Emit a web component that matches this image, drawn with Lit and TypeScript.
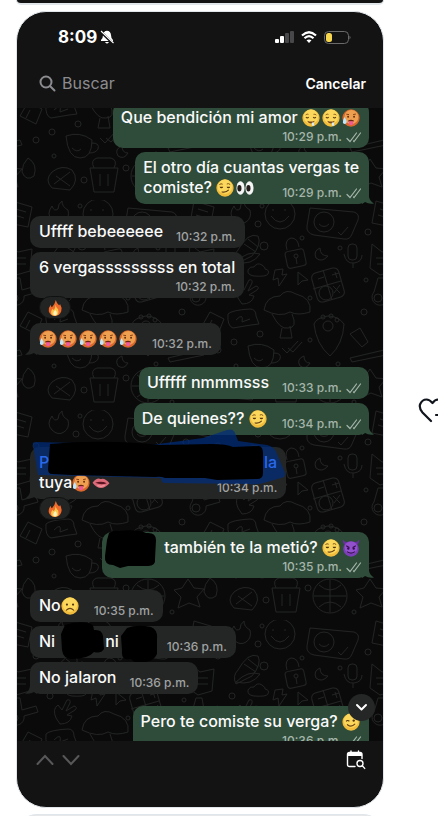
import { LitElement, html, css, svg, nothing } from "lit";
import { customElement, property } from "lit/decorators.js";

type EmojiName = "drool" | "hot" | "smirk" | "eyes" | "lips" | "devil" | "frown" | "wink" | "fire";

const face = svg`
  <circle cx="10" cy="10" r="9.6" fill="#f3bd3c"/>
  <circle cx="10" cy="8.6" r="8" fill="#fbd75c"/>`;

const art: Record<EmojiName, unknown> = {
  drool: svg`${face}
    <path d="M4 6.6q1.6-1.6 3.2-.6M12.8 6q1.8-.8 3.2.8" stroke="#8a5a18" fill="none"/>
    <path d="M4.4 9q1.4 1.6 3 0M12.4 9q1.6 1.6 3 0" stroke="#5d3a10" stroke-width="1.3" fill="none"/>
    <path d="M6 13q4 2 8 0-.8 3-4 3t-4-3z" fill="#7a4514"/>
    <path d="M11 15h2.400v3q-1.200 1.800-2.400 0z" fill="#d5ecf8"/>`,
  hot: svg`
    <circle cx="10" cy="10" r="9.600" fill="#d9672a"/>
    <circle cx="10.400" cy="8.800" r="7.800" fill="#ee9f50"/>
    <path d="M4.800 5.800l3 .4M12.400 6.200l3-.6" stroke="#7a3310" stroke-width="1"/>
    <circle cx="6.800" cy="8.600" r="1" fill="#5b260d"/><circle cx="13.400" cy="8.600" r="1" fill="#5b260d"/>
    <path d="M6.800 12.800q3.200-1.600 6.400 0l-.6 1.400H7.400z" fill="#6b2411"/>
    <path d="M7.800 13.600h4.600v3q-2.300 2.800-4.600 0z" fill="#f0599a"/>
    <path d="M2.600 9q3.200 4 2.400 6.600-2 2.400-4 0Q.6 13 2.600 9z" fill="#bfe6fb"/>`,
  smirk: svg`${face}
    <path d="M3.800 6.200q1.800-1.600 3.600-.4M12 5.600q2-1.200 3.800.6" stroke="#7c5016" fill="none" stroke-width="1.100"/>
    <path d="M4 8.600h4q-.4 1.800-2 1.800T4 8.600zM11.800 8.600h4q-.4 1.800-2 1.800t-2-1.800z" fill="#55340f"/>
    <path d="M6.800 14.400q4.600.8 7-2" stroke="#6b4313" stroke-width="1.300" fill="none" stroke-linecap="round"/>`,
  eyes: svg`
    <ellipse cx="5" cy="10" rx="4.500" ry="7.400" fill="#f5f5f5"/><ellipse cx="15" cy="10" rx="4.500" ry="7.400" fill="#f5f5f5"/>
    <ellipse cx="3.800" cy="10.400" rx="2.300" ry="3.600" fill="#221d1b"/><ellipse cx="13.800" cy="10.400" rx="2.300" ry="3.600" fill="#221d1b"/>`,
  lips: svg`
    <path d="M.6 9.600Q5 4.400 8.400 5.200q1.600.8 2.800.2 4-.4 8.200 5-4.600 5.200-9.400 5.200T.6 9.600z" fill="#dd6a78"/>
    <path d="M3.600 9.800q6.400-2.400 12.800.4-6 2.600-12.800-.4z" fill="#5a1320"/>
    <path d="M6 13q4 1.400 8-.2" stroke="#f4a3ab" stroke-width="1.100" fill="none"/>`,
  devil: svg`
    <path d="M.8.800Q1 6 4.400 7l3-3Q3 3.600.8.800zM19.200.800Q19 6 15.600 7l-3-3q4.400-.4 6.600-3.200z" fill="#6b2fa0"/>
    <circle cx="10" cy="11" r="8.600" fill="#7c3db8"/><circle cx="10" cy="9.800" r="7" fill="#9250cc"/>
    <path d="M4.600 7.600l3.600 1.800M15.400 7.600l-3.600 1.800" stroke="#35104f" stroke-width="1.300"/>
    <circle cx="7" cy="10.600" r="1.300" fill="#35104f"/><circle cx="13" cy="10.600" r="1.300" fill="#35104f"/>
    <path d="M5.600 14q4.400 3.600 8.800 0" stroke="#35104f" stroke-width="1.300" fill="none"/>`,
  frown: svg`${face}
    <circle cx="6.600" cy="8.400" r="1.200" fill="#55340f"/><circle cx="13.400" cy="8.400" r="1.200" fill="#55340f"/>
    <path d="M6 14.600q4-3.800 8 0" stroke="#6b4313" stroke-width="1.300" fill="none" stroke-linecap="round"/>`,
  wink: svg`${face}
    <path d="M4.600 9.400q1.600-2 3.600-.2" stroke="#55340f" stroke-width="1.300" fill="none"/>
    <circle cx="13" cy="8.400" r="1.300" fill="#55340f"/>
    <path d="M6 13q4.400 3.400 8.200-.6" stroke="#6b4313" stroke-width="1.300" fill="none" stroke-linecap="round"/>`,
  fire: svg`
    <path d="M11 0q1 4 4 6.600 1 .2 1.200-2 3 5 1.600 9.600Q16 20 10 20T2.200 14Q1.600 9.600 4.800 6q0 2.800 1.400 3Q9.800 5.400 11 0z" fill="#ee6a2c"/>
    <path d="M10.800 6q.2 3.400 3 5.600 2.200 8-3.800 8.200-6-.4-4.600-6.200Q6 12 7.400 11q.4 1.800 1.200 1.600Q10.600 10 10.800 6z" fill="#fbc64c"/>
    <path d="M10.400 12.600q2.600 2.600 1.800 5.400-2 2.800-4.200.2-.8-3 2.400-5.600z" fill="#fff3c0"/>`,
};

@customElement("chat-emoji")
class ChatEmoji extends LitElement {
  @property() name: EmojiName = "smirk";
  static styles = css`
    :host { display: inline-block; width: 18px; height: 18px; margin-right: 2px; vertical-align: -4px; }
    svg { display: block; width: 100%; height: 100%; }
  `;
  render() {
    return html`<svg viewBox="0 0 20 20" role="img" aria-label=${this.name}>${art[this.name]}</svg>`;
  }
}

const e = (...names: EmojiName[]) => names.map((n) => html`<chat-emoji name=${n}></chat-emoji>`);

/* Hand-painted black strokes that hide names. */
const scribble = (kind: string, w: number, path: string) => html`<span class="hidden-name ${kind}"><svg class="ink" width=${w} height="40" viewBox="0 0 ${w} 40" aria-hidden="true"><path d=${path}/></svg></span>`;

interface Message {
  out?: boolean;
  time: string;
  body: unknown;
  layout?: "stacked" | "wrapped";
  tail?: boolean;
  last?: boolean;
  fire?: boolean;
}

const messages: Message[] = [
  { out: true, time: "10:29 p.m.", layout: "stacked", body: html`Que bendición mi amor ${e("drool", "drool", "hot")}` },
  { out: true, time: "10:29 p.m.", layout: "wrapped", tail: true, last: true, body: html`El otro día cuantas vergas te<br>comiste? ${e("smirk", "eyes")}` },
  { time: "10:32 p.m.", body: "Uffff bebeeeeee" },
  { time: "10:32 p.m.", layout: "stacked", fire: true, body: "6 vergasssssssss en total" },
  { time: "10:32 p.m.", tail: true, last: true, body: e("hot", "hot", "hot", "hot", "hot") },
  { out: true, time: "10:33 p.m.", body: "Ufffff nmmmsss" },
  { out: true, time: "10:34 p.m.", tail: true, last: true, body: html`De quienes?? ${e("smirk")}` },
  {
    time: "10:34 p.m.", layout: "wrapped", tail: true, last: true, fire: true,
    body: html`<span class="marked">
      <svg class="marker" width="256" height="56" viewBox="0 0 256 56" aria-hidden="true">
        <path class="blue" d="M2 16Q1 13 5 13L120 16 172 9 196 1Q202-1 204 4L207 12 236 16Q244 18 246 25L254 44Q255 48 250 49L236 53Q228 56 218 55L134 54Q130 54 130 49L7 46Z"/>
        <path d="M19 15Q70 10 130 16L180 15Q196 15 202 18L228 17Q232 18 232 24L232 44Q232 50 226 50L186 51 174 49 134 49Q130 47 124 48L80 47 40 46 21 45Q17 45 17 40Z"/>
      </svg>
      <span class="link">P</span><span class="link">la</span></span>tuya${e("hot", "lips")}`,
  },
  {
    out: true, time: "10:35 p.m.", layout: "stacked", tail: true, last: true,
    body: html`${scribble("lead", 54, "M5 4Q9 1 14 2 34 0 42 4 52 3 52 11L51 30Q52 37 44 37L24 37 16 39 9 36Q0 36 1 27L3 11Z")}también te la metió? ${e("smirk", "devil")}`,
  },
  { time: "10:35 p.m.", body: html`No${e("frown")}` },
  {
    time: "10:36 p.m.",
    body: html`Ni${scribble("middle", 48, "M5 4Q16 0 28 2 34 3 34 9 42 8 43 15L44 28Q41 33 34 31 28 38 12 38 3 38 2 29L1 13Z")}ni${scribble("end", 40, "M8 5Q18 1 32 4 39 7 38 16L38 31Q35 38 26 39 17 42 12 36 2 38 3 28L2 13Z")}`,
  },
  { time: "10:36 p.m.", tail: true, last: true, body: "No jalaron" },
  { out: true, time: "10:36 p.m.", layout: "stacked", last: true, body: html`Pero te comiste su verga? ${e("wink")}` },
];

@customElement("chat-bubble")
class ChatBubble extends LitElement {
  @property({ attribute: false }) message!: Message;

  static styles = css`
    :host { display: flex; flex-direction: column; align-items: flex-start; }
    .bubble {
      position: relative; box-sizing: border-box; display: flex; align-items: flex-end;
      column-gap: 13px; padding: 5px 9px 3px; min-height: 32px; border-radius: 10px;
      background: #242626; color: #fafafa; font-size: 16px; line-height: 20px; font-weight: 500;
    }
    .out { align-self: flex-end; background: #2f4c3a; padding: 5px 7px 3px 8px; }
    .stacked { flex-direction: column; min-height: 46px; justify-content: space-between; }
    .wrapped { min-height: 52px; }
    .text { white-space: nowrap; align-self: flex-start; }
    .meta {
      display: flex; align-items: center; gap: 4px; color: #a0a2a2;
      font-size: 12px; line-height: 16px; font-weight: 500; white-space: nowrap;
    }
    .out .meta { color: #a5b5aa; }
    .wrapped.out .meta { margin-left: -90px; }
    .wrapped.in .meta { margin-left: -73px; }
    .tail { position: absolute; bottom: 0; left: -5px; fill: #242626; }
    .out .tail { left: auto; right: -5px; fill: #2f4c3a; transform: scaleX(-1); }
    .reaction {
      box-sizing: border-box; display: grid; place-items: center; width: 32px; height: 23px;
      margin: -2px 0 0 9px; border: 1px solid #101111; border-radius: 12px;
      background: #222424; position: relative; padding: 0;
    }
    .reaction chat-emoji { width: 16px; height: 16px; margin: 0; }
    .marked { display: flex; justify-content: space-between; width: 238px; position: relative; }
    .link { color: #2969ea; position: relative; }
    .marker { position: absolute; left: -8px; top: -23px; overflow: visible; }
    .blue { fill: #002c7c; fill-opacity: 0.72; }
    .hidden-name { position: relative; display: inline-block; height: 18px; vertical-align: -4px; }
    .ink { position: absolute; left: 0; top: -10px; }
    .lead { width: 54px; }
    .lead .ink { left: -6px; }
    .middle { width: 50px; }
    .middle .ink { left: 5px; top: -12px; }
    .end { width: 35px; }
  `;

  render() {
    const m = this.message;
    return html`
      <div class="bubble ${m.out ? "out" : "in"} ${m.layout ?? ""}">
        ${m.tail ? html`<svg class="tail" width="12" height="12" viewBox="0 0 12 12" aria-hidden="true"><path d="M5 0V5Q4 9 0 11.500 5 12.500 9 10L12 12V0Z"/></svg>` : nothing}
        <div class="text">${m.body}</div>
        <div class="meta">
          <time>${m.time}</time>
          ${m.out ? html`<svg width="16" height="11" viewBox="0 0 16 11" fill="none" stroke="currentColor" stroke-width="1.200" stroke-linecap="round" aria-hidden="true"><path d="M1 6.500L4 9.500 10.500 1M7.500 9L8 9.500 14.500 1"/></svg>` : nothing}
        </div>
      </div>
      ${m.fire ? html`<button class="reaction" aria-label="Reacciones"><chat-emoji name="fire"></chat-emoji></button>` : nothing}
    `;
  }
}

/* Line-art doodles repeated behind the conversation. */
const doodles = svg`
  <pattern id="doodles" width="182" height="210" patternUnits="userSpaceOnUse" x="27" y="92">
    <g fill="none" stroke="#222323" stroke-width="1">
      <path d="M8 20Q2 14 8 6q2 6 6 3 0-5 4-8 0 6 6 9 2 8-4 12Q14 26 8 20z"/>
      <circle cx="54" cy="14" r="15"/><path d="M45 16q9 12 18 0M47 9v2M59 9v2"/>
      <path d="M84 8l44 4q6 2 4 8l-6 14q-2 6-8 5l-30-4q-8-2-7-9z"/><circle cx="98" cy="22" r="10"/><path d="M93 24q5 5 10 0M112 32l3 3 7-8"/>
      <path d="M12 50q10-18 20-14 4 8-6 20L10 64Q6 56 12 50zM18 44l12 8M22 39l10 8M10 62q12-12 24-8-8 12-24 8"/>
      <rect x="60" y="50" width="19" height="17" rx="3" transform="rotate(-12 70 58)"/><path d="M61 50q-3-10 4-12 7 0 8 9"/><circle cx="70" cy="56" r="2"/><path d="M70 58l1 6"/>
      <path d="M94 48q-7 3-4 10 6 5 12-2-8 0-8-8z"/>
      <rect x="122" y="44" width="9" height="16" rx="4"/><path d="M118 54q2 10 10 9 8-1 8-8M127 63v5"/>
      <path d="M28 76q-7-1-6-6 2-4 6-3 3-5 8-2 4 3 3 4 5 1 3 5-2 3-14 2zM49 70l8-1-1 6 5-1-8 12-1-8-5 2zM72 72l10 8-6 1-4 4z"/>
      <rect x="88" y="70" width="28" height="30" rx="5" transform="rotate(-16 102 85)"/><path d="M97 70l9 30M87 89l28-8M92 79l6-2M106 75l7-2M109 72l2 6M107 86l7 7M114 85l-6 8"/><circle cx="100" cy="93" r="7"/>
      <path d="M12 98q-4-9 2-13l4 5 5-10q4-1 3 3l-4 8 8-5q4 1 1 4l-8 5 5 1q-2 8-12 8z"/>
      <path d="M38 110q2-14 16-14 6-8 16-2 16 4 14 18-12 4-20 0-10 6-26-2zM46 114q8 16 16 14 10 0 4-14M56 128l-2 10h12l-2-12"/>
      <path d="M2 114q4-4 22-5 6 0 6 7l3 8-8 1-18 3q-6-2-5-14zM10 120q8-8 6 2l8-3"/>
      <path d="M88 124q2-6 14-8 10 0 16 8-1 20-14 32-14-12-16-32z"/><circle cx="102" cy="126" r="5"/><circle cx="97" cy="117" r="2"/><circle cx="105" cy="116" r="2"/><circle cx="111" cy="120" r="2"/>
      <path d="M22 146q14-5 26 4 0 18-12 18T22 146zM48 153q8 0 6 6-2 4-9 4M28 158q5 5 9 1"/>
      <path d="M56 148l5 5 11-12M62 148l5 4 9-10M78 156q-8 3-4 10 6 4 10-3-6 0-6-7z"/>
      <path d="M124 134l10-6 8 14-6 5zM124 158l34-8 2 5-34 7z"/>
      <path d="M150 1l20 6-4 20-20-4zM154 9l10 3M152 15l10 3"/><path d="M146 44l10 8 14-3-2 22-14 4-10-7zM150 58h14M151 64h13"/>
      <path d="M148 92a8 8 0 1 0 14 4l14-4-2-6-14 4-2-12h-6z"/><circle cx="152" cy="98" r="4"/>
      <path d="M166 112l-8 14 16 8 6-15zM168 120l-4 8"/>
      <path d="M8 182q-8 8 0 16l18 2q10-10 2-20-10-6-20 2zM12 186l14 10M10 194l16-12"/>
      <path d="M46 178h28l-4 24H50zM50 178q-4-8 3-10h14q7 2 3 10M56 184v12M64 184v12"/>
      <circle cx="104" cy="186" r="17"/><path d="M104 170v32M88 186h32M93 175q11 10 22 0M93 197q11-10 22 0"/>
      <path d="M138 178l6-9 6 9 10 1-7 8 3 10-11-4-11 5 3-11-7-7zM166 168q10 6 6 18-8 6-12-4 0-8 6-14z"/>
      <circle cx="32" cy="24" r="3"/><circle cx="36" cy="6" r="2"/><circle cx="76" cy="38" r="2"/><circle cx="38" cy="46" r="4"/><circle cx="114" cy="48" r="2"/><circle cx="142" cy="32" r="3"/><circle cx="6" cy="76" r="3"/><circle cx="140" cy="80" r="2"/><circle cx="84" cy="98" r="2"/><circle cx="34" cy="134" r="3"/><circle cx="8" cy="142" r="3"/><circle cx="84" cy="140" r="2"/><circle cx="138" cy="112" r="3"/><circle cx="10" cy="166" r="2"/><circle cx="40" cy="190" r="3"/><circle cx="82" cy="178" r="3"/><circle cx="128" cy="202" r="2"/><circle cx="174" cy="36" r="3"/><circle cx="174" cy="150" r="3"/><circle cx="112" cy="164" r="2"/>
    </g>
  </pattern>`;

@customElement("app-root")
class AppRoot extends LitElement {
  static styles = css`
    :host {
      display: grid; grid-template-columns: minmax(0, 1fr) 54px; grid-template-rows: 100vh; padding-left: 16px;
      overflow: hidden; background: #fff; box-sizing: border-box;
      font-family: Inter, "Liberation Sans", sans-serif;
    }
    button, input { font: inherit; border: 0; background: none; padding: 0; color: inherit; }
    svg { display: block; }
    .feed { display: flex; flex-direction: column; gap: 6px; min-width: 0; }
    .card { border: 1px solid #e1e6ea; border-radius: 30px; background: #131313; overflow: hidden; flex: none; }
    .before { height: 5px; border-radius: 0 0 30px 30px; border-top: 0; box-sizing: border-box; border-bottom-width: 2px; }
    .after { height: 40px; background: #e6e8ea; }
    .status { display: flex; justify-content: space-between; align-items: center; padding: 14px 32px 0 41px; height: 22px; color: #fff; }
    .clock, .signals { display: flex; align-items: center; }
    .clock { gap: 3px; font-size: 17px; font-weight: 700; }
    .signals { gap: 7px; }
    .search { display: flex; align-items: center; gap: 6px; padding: 23px 17px 0 22px; height: 24px; color: #8c8c90; }
    .field { flex: 1; min-width: 0; font-size: 16px; outline: 0; }
    .field::placeholder { color: #8c8c90; opacity: 1; }
    .cancel { color: #fff; font-size: 14px; font-weight: 600; }
    .chat { position: relative; margin-top: 13px; background: #0a0a0a; overflow: hidden; isolation: isolate; }
    .wallpaper { position: absolute; inset: 0; width: 100%; height: 100%; z-index: -1; }
    .thread { display: flex; flex-direction: column; gap: 4px; margin: -6px 14px -19px 13px; }
    .last { margin-bottom: 8px; }
    .jump {
      position: absolute; right: 8px; bottom: 20px; width: 27px; height: 27px; border-radius: 50%;
      background: #252727; color: #fff; display: grid; place-items: center;
    }
    .tools { display: flex; align-items: flex-start; gap: 8px; padding: 9px 17px 38px 19px; height: 19px; color: #58585a; }
    .tools button { display: block; padding-top: 4px; }
    .tools .calendar { margin-left: auto; color: #fff; padding: 0; }
    .side { display: flex; align-items: center; overflow: hidden; padding: 4px 0 0 34px; }
    .side button { color: #10141c; }
  `;

  render() {
    return html`
      <main class="feed">
        <div class="card before"></div>
        <section class="card">
          <div class="status">
            <div class="clock">
              <span>8:09</span>
              <svg width="14" height="14" viewBox="0 0 14 14" aria-hidden="true">
                <path d="M7 .8Q10.600 1 11 5q0 3.500 2 5v1H1v-1q2-1.500 2-5Q3.400 1 7 .8zM5 12h4q-2 3-4 0z" fill="#fff"/>
                <path d="M.5 1.500L13 13.500" stroke="#131313" stroke-width="2.600"/><path d="M1 1L13.500 13" stroke="#fff" stroke-width="1.100"/>
              </svg>
            </div>
            <div class="signals">
              <svg width="19" height="12" viewBox="0 0 19 12" aria-hidden="true">
                <rect y="8" width="4" height="4" rx="1" fill="#fff"/><rect x="5" y="5" width="4" height="7" rx="1" fill="#fff"/>
                <rect x="10" y="2" width="4" height="10" rx="1" fill="#48484a"/><rect x="15" width="4" height="12" rx="1" fill="#48484a"/>
              </svg>
              <svg width="16" height="12" viewBox="0 0 16 12" fill="none" stroke="#fff" stroke-width="2.200" aria-hidden="true">
                <path d="M1 4.500Q8-2 15 4.500M3.500 7.300Q8 3 12.500 7.300"/><path d="M8 12L5.500 9.300Q8 7.500 10.500 9.300z" fill="#fff" stroke="none"/>
              </svg>
              <svg width="27" height="13" viewBox="0 0 27 13" aria-hidden="true">
                <rect x=".5" y=".5" width="24" height="12" rx="4" fill="none" stroke="#6a6a6a"/>
                <rect x="2" y="2" width="6" height="9" rx="2.500" fill="#f5d64e"/><path d="M25.500 4.500q2 2 0 4z" fill="#6a6a6a"/>
              </svg>
            </div>
          </div>
          <div class="search">
            <svg width="17" height="17" viewBox="0 0 17 17" fill="none" stroke="currentColor" stroke-width="2" stroke-linecap="round" aria-hidden="true"><circle cx="7" cy="7" r="5.500"/><path d="M11.200 11.200L15.500 15.500"/></svg>
            <input class="field" type="search" placeholder="Buscar" aria-label="Buscar">
            <button class="cancel">Cancelar</button>
          </div>
          <div class="chat">
            <svg class="wallpaper" aria-hidden="true"><defs>${doodles}</defs><rect width="100%" height="100%" fill="url(#doodles)"/></svg>
            <div class="thread">
              ${messages.map((m) => html`<chat-bubble class=${m.last ? "last" : ""} .message=${m}></chat-bubble>`)}
            </div>
            <button class="jump" aria-label="Ir al final">
              <svg width="13" height="9" viewBox="0 0 13 9" fill="none" stroke="currentColor" stroke-width="2" stroke-linecap="round" stroke-linejoin="round"><path d="M2 2l4.500 4.500L11 2"/></svg>
            </button>
          </div>
          <nav class="tools">
            <button aria-label="Anterior"><svg width="18" height="12" viewBox="0 0 18 12" fill="none" stroke="currentColor" stroke-width="2" stroke-linecap="round"><path d="M1.500 10L9 2l7.500 8"/></svg></button>
            <button aria-label="Siguiente"><svg width="18" height="12" viewBox="0 0 18 12" fill="none" stroke="currentColor" stroke-width="2" stroke-linecap="round"><path d="M1.500 2L9 10l7.500-8"/></svg></button>
            <button class="calendar" aria-label="Buscar por fecha">
              <svg width="20" height="20" viewBox="0 0 20 20" fill="none" stroke="currentColor" stroke-width="1.400" stroke-linecap="round">
                <path d="M9 16.500H3.500Q1.500 16.500 1.500 14.500V4.500Q1.500 2.500 3.500 2.500H14Q16 2.500 16 4.500V8.500"/><path d="M1.500 3h14.500v3H1.500z" fill="currentColor" stroke="none"/><path d="M5 1v2M12.500 1v2"/>
                <circle cx="14" cy="13.500" r="3"/><path d="M16.300 15.800l2.400 2.600"/>
              </svg>
            </button>
          </nav>
        </section>
        <div class="card after"></div>
      </main>
      <aside class="side">
        <button aria-label="Me gusta">
          <svg width="26" height="26" viewBox="0 0 26 26" fill="none" stroke="currentColor" stroke-width="2.200" stroke-linecap="round" stroke-linejoin="round"><path d="M13 24L4.500 15.500Q1 11.500 2 7.500 4 2.500 8.500 2.500 11.500 2.500 14.500 6 17 2.500 20 2.500 25 4 25 9M18 18h7M21.500 14.500v7"/></svg>
        </button>
      </aside>
    `;
  }
}
